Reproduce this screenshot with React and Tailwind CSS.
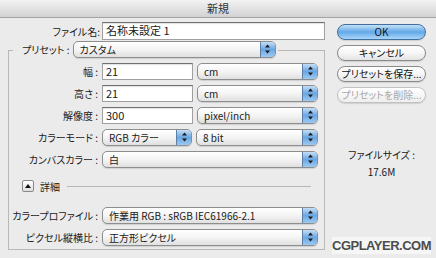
import React from 'react';

const Arrows = () => (
  <svg width="7" height="10" viewBox="0 0 7 10">
    <path d="M3.5 0.5 L6 3.5 L1 3.5 Z" fill="#1a1a1a" />
    <path d="M3.5 9.5 L6 6.5 L1 6.5 Z" fill="#1a1a1a" />
  </svg>
);

const Popup = ({ className = '', children }) => (
  <div className={`h-[17px] flex rounded-[5px] border border-[#8e8e8e] bg-gradient-to-b from-white via-[#f4f4f4] to-[#e0e0e0] shadow-[0_1px_1px_rgba(0,0,0,0.12)] ${className}`}>
    <span className="flex-1 pl-[6px] leading-[15px] whitespace-nowrap overflow-hidden">{children}</span>
    <span className="w-[15px] rounded-r-[4px] border-l border-[#5b7fa6] bg-gradient-to-b from-[#c5def5] via-[#6aa6e2] to-[#9ccaf2] flex items-center justify-center">
      <Arrows />
    </span>
  </div>
);

const Field = ({ className = '', children }) => (
  <div className={`h-[17px] border border-[#a0a0a0] border-t-[#707070] bg-white pl-[3px] leading-[15px] shadow-[inset_0_1px_1px_rgba(0,0,0,0.12)] ${className}`}>
    {children}
  </div>
);

const Button = ({ kind = 'normal', children }) => {
  const styles = {
    ok: 'border-[#40709f] bg-gradient-to-b from-[#c4e1f8] via-[#62a8e8] to-[#aad6f8] text-[#111]',
    normal: 'border-[#8a8a8a] bg-gradient-to-b from-white via-[#f6f6f6] to-[#e4e4e4] text-[#111]',
    disabled: 'border-[#c2c2c2] bg-gradient-to-b from-white to-[#eeeeee] text-[#a6a6a6]',
  };
  return (
    <div className={`h-[16px] w-[89px] rounded-full border text-center leading-[14px] shadow-[0_1px_1px_rgba(0,0,0,0.12)] ${styles[kind]}`}>
      {children}
    </div>
  );
};

const Row = ({ label, children }) => (
  <div className="h-[22px] flex items-center">
    <span className="w-[89px] text-right whitespace-nowrap">{label}</span>
    <div className="ml-[4px] flex items-center gap-[4px]">{children}</div>
  </div>
);

const App = () => {
  return (
    <div className="relative w-[436px] h-[258px] overflow-hidden bg-[#ebebeb] text-[10px] text-[#1a1a1a] font-['Noto_Sans_CJK_JP',sans-serif] [font-feature-settings:'palt']">
      {/* Title bar */}
      <div className="h-[18px] border-b border-[#a3a3a3] bg-gradient-to-b from-[#f3f3f3] to-[#d2d2d2] text-center text-[11px] leading-[17px] text-[#333]">
        新規
      </div>

      <div className="flex">
        {/* Left side */}
        <div className="w-[330px]">
          <div className="mt-[4px] h-[18px] flex items-center">
            <span className="w-[100px] text-right whitespace-nowrap">ファイル名:</span>
            <Field className="ml-[2px] w-[223px] h-[18px] text-[11px]">名称未設定 1</Field>
          </div>

          <div className="mt-[10px] ml-[8px] w-[317px] h-[200px] border border-[#b8b8b8]">
            {/* Preset legend */}
            <div className="-mt-[11px] ml-[4px] h-[18px] flex">
              <div className="flex items-center bg-[#ebebeb] pl-[9px] pr-[2px]">
                <span className="mr-[3px] whitespace-nowrap">プリセット :</span>
                <Popup className="w-[203px]">カスタム</Popup>
              </div>
            </div>

            <div className="mt-[2px]">
              <Row label="幅 :">
                <Field className="w-[91px] text-[11px]">21</Field>
                <Popup className="w-[121px]">cm</Popup>
              </Row>
              <Row label="高さ :">
                <Field className="w-[91px] text-[11px]">21</Field>
                <Popup className="w-[121px]">cm</Popup>
              </Row>
              <Row label="解像度 :">
                <Field className="w-[91px] text-[11px]">300</Field>
                <Popup className="w-[121px]">pixel/inch</Popup>
              </Row>
              <Row label="カラーモード :">
                <Popup className="w-[90px]">RGB カラー</Popup>
                <Popup className="w-[122px]">8 bit</Popup>
              </Row>
              <Row label="カンバスカラー :">
                <Popup className="w-[216px]">白</Popup>
              </Row>
            </div>

            {/* Advanced disclosure */}
            <div className="mt-[6px] h-[20px] flex items-center pl-[13px] pr-[13px]">
              <div className="w-[12px] h-[12px] rounded-[2px] border border-[#8a8a8a] bg-gradient-to-b from-white to-[#dedede] flex items-center justify-center">
                <svg width="6" height="4" viewBox="0 0 6 4">
                  <path d="M3 0 L6 4 L0 4 Z" fill="#111" />
                </svg>
              </div>
              <span className="ml-[6px]">詳細</span>
              <div className="ml-[7px] flex-1 border-t border-[#b8b8b8]" />
            </div>

            <div className="mt-[8px]">
              <Row label="カラープロファイル :">
                <Popup className="w-[216px]">作業用 RGB : sRGB IEC61966-2.1</Popup>
              </Row>
              <Row label="ピクセル縦横比 :">
                <Popup className="w-[216px]">正方形ピクセル</Popup>
              </Row>
            </div>
          </div>
        </div>

        {/* Right side */}
        <div className="ml-[7px] mt-[6px] w-[89px] flex flex-col gap-[5px]">
          <Button kind="ok">OK</Button>
          <Button>キャンセル</Button>
          <Button>プリセットを保存...</Button>
          <Button kind="disabled">プリセットを削除...</Button>
          <div className="mt-[40px] text-center leading-[14px]">ファイルサイズ :</div>
          <div className="-mt-[2px] text-center leading-[14px]">17.6M</div>
        </div>
      </div>

      {/* Watermark */}
      <div className="absolute left-[332px] top-[237px] w-[99px] h-[17px] bg-[#f6f6f6] text-center text-[13px] leading-[17px] font-bold tracking-[-0.5px] text-[#4d4d4d] font-['Liberation_Sans',sans-serif]">
        CGPLAYER.COM
      </div>
    </div>
  );
};

export default App;
